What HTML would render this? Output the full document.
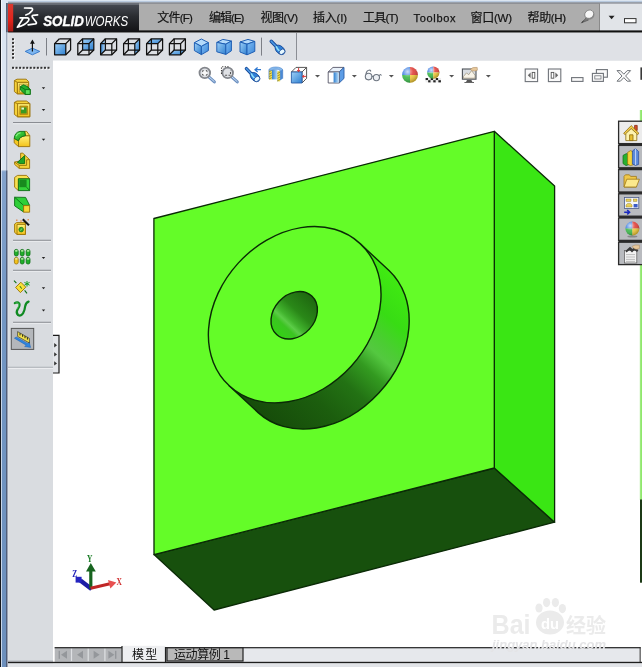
<!DOCTYPE html>
<html lang="zh-CN"><head><meta charset="utf-8"><title>SolidWorks</title>
<style>
html,body{margin:0;padding:0;background:#fff;}
body{width:642px;height:667px;overflow:hidden;position:relative;font-family:"Liberation Sans","Noto Sans CJK SC",sans-serif;}
svg{position:absolute;left:0;top:0;display:block;will-change:transform}
text{font-family:"Liberation Sans","Noto Sans CJK SC",sans-serif;}
</style></head><body>
<svg width="642" height="667" viewBox="0 0 642 667">
<defs>
<linearGradient id="logobg" x1="0" y1="0" x2="0" y2="1"><stop offset="0" stop-color="#464a52"/><stop offset="0.45" stop-color="#2a2c31"/><stop offset="1" stop-color="#131316"/></linearGradient>
<linearGradient id="redbg" x1="0" y1="0" x2="0" y2="1"><stop offset="0" stop-color="#d93a30"/><stop offset="0.6" stop-color="#e0241c"/><stop offset="1" stop-color="#a81a14"/></linearGradient>
<linearGradient id="frameL" x1="0" y1="0" x2="0" y2="1"><stop offset="0" stop-color="#84a3cc"/><stop offset="0.3" stop-color="#7296c3"/><stop offset="1" stop-color="#6c8fbc"/></linearGradient>
<linearGradient id="cubeB" x1="0" y1="0" x2="1" y2="1"><stop offset="0" stop-color="#9fd0f7"/><stop offset="1" stop-color="#2d7fd0"/></linearGradient>
<linearGradient id="cubeB2" x1="0" y1="0" x2="1" y2="0"><stop offset="0" stop-color="#2d7fd0"/><stop offset="1" stop-color="#bfe0fa"/></linearGradient>
<linearGradient id="cubeB3" x1="0" y1="0" x2="1" y2="1"><stop offset="0" stop-color="#7fbdf4"/><stop offset="1" stop-color="#3b86d8"/></linearGradient>
<linearGradient id="yel" x1="0" y1="0" x2="0" y2="1"><stop offset="0" stop-color="#fff27a"/><stop offset="1" stop-color="#f4c21a"/></linearGradient>
<linearGradient id="grn" x1="0" y1="0" x2="1" y2="1"><stop offset="0" stop-color="#55e04a"/><stop offset="1" stop-color="#0f9a1a"/></linearGradient>
<radialGradient id="ballhl" cx="0.35" cy="0.3" r="0.7"><stop offset="0" stop-color="#fff" stop-opacity="0.75"/><stop offset="0.5" stop-color="#fff" stop-opacity="0.1"/><stop offset="1" stop-color="#000" stop-opacity="0.25"/></radialGradient>
</defs>

<rect x="0" y="0" width="642" height="667" fill="#ffffff"/>
<rect x="8" y="32.4" width="634" height="28.1" fill="#dcdfe4"/>
<rect x="8" y="60" width="45" height="607" fill="#d9dce0"/>
<rect x="0" y="0" width="642" height="1.2" fill="#dbe5f0"/>
<rect x="0" y="1.2" width="642" height="1.2" fill="#a9bdd6"/>
<rect x="0" y="2.4" width="642" height="1.6" fill="#6e737c"/>
<rect x="139" y="3.5" width="461" height="27.5" fill="#adadad"/>
<rect x="600" y="3.5" width="42" height="27.5" fill="#e1e4e8"/>
<rect x="599" y="3.5" width="1" height="27.5" fill="#8a8a8a"/>
<rect x="8" y="30.4" width="634" height="2.1" fill="#101010"/>
<rect x="8" y="3.9" width="131" height="27.6" fill="url(#logobg)"/>
<rect x="8" y="3.9" width="131" height="1" fill="#6a6e76"/>
<rect x="7.7" y="3.9" width="5.5" height="27.6" fill="url(#redbg)"/>
<rect x="0" y="0" width="8" height="667" fill="#dbe5f2"/>
<rect x="2" y="171" width="4.4" height="496" fill="url(#frameL)"/>
<rect x="2" y="170" width="4.4" height="1.2" fill="#b4c6de"/>
<rect x="6.2" y="32.4" width="1.3" height="138" fill="#8f99ac"/>
<rect x="6.2" y="3" width="1.5" height="29.4" fill="#333c52"/>
<rect x="6.2" y="170.4" width="1.5" height="497" fill="#3a4560"/>
<rect x="7.6" y="32.4" width="0.6" height="635" fill="#e8ebef"/>
<rect x="0" y="0" width="1" height="667" fill="#15171c"/>
<rect x="1" y="0" width="1" height="170.6" fill="#f2f5fa"/>
<rect x="1" y="170.6" width="1" height="497" fill="#c9d7ea"/>
<g fill="none" stroke="#fff" stroke-width="1.7" stroke-linecap="round" stroke-linejoin="round"><path d="M24.6 8 L31.4 8.2 Q33.2 8.6 32.2 10.4 Q30 13.6 25.8 15"/><path d="M20 17.8 L27.4 17.9 Q29.8 18.4 28.4 20.8 Q25.6 25.2 17.4 27.2 L22.8 18.8"/><path d="M37.6 14.8 L33 15.4 Q31.6 15.8 32.4 17.2 L36.2 22.2 Q37 23.6 35.2 23.9 L28.2 24.9"/></g>
<text x="43.2" y="25.8" font-size="14" font-style="italic" fill="#fff"><tspan font-weight="bold" stroke="#fff" stroke-width="0.35" textLength="40.6" lengthAdjust="spacingAndGlyphs">SOLID</tspan><tspan dx="0.9" textLength="43.4" lengthAdjust="spacingAndGlyphs">WORKS</tspan></text>
<text x="157.3" y="22" font-size="12" fill="#141414" stroke="#141414" stroke-width="0.2" textLength="35.5" lengthAdjust="spacing">文件<tspan font-size="11.5">(F)</tspan></text>
<text x="209" y="22" font-size="12" fill="#141414" stroke="#141414" stroke-width="0.2" textLength="35.400000000000006" lengthAdjust="spacing">编辑<tspan font-size="11.5">(E)</tspan></text>
<text x="260.5" y="22" font-size="12" fill="#141414" stroke="#141414" stroke-width="0.2" textLength="37.5" lengthAdjust="spacing">视图<tspan font-size="11.5">(V)</tspan></text>
<text x="313" y="22" font-size="12" fill="#141414" stroke="#141414" stroke-width="0.2" textLength="34" lengthAdjust="spacing">插入<tspan font-size="11.5">(I)</tspan></text>
<text x="363" y="22" font-size="12" fill="#141414" stroke="#141414" stroke-width="0.2" textLength="35.5" lengthAdjust="spacing">工具<tspan font-size="11.5">(T)</tspan></text>
<text x="413.5" y="22" font-size="11" fill="#141414" stroke="#141414" stroke-width="0.25" textLength="42.0" lengthAdjust="spacing">Toolbox</text>
<text x="470.5" y="22" font-size="12" fill="#141414" stroke="#141414" stroke-width="0.2" textLength="41.5" lengthAdjust="spacing">窗口<tspan font-size="11.5">(W)</tspan></text>
<text x="527.5" y="22" font-size="12" fill="#141414" stroke="#141414" stroke-width="0.2" textLength="38.5" lengthAdjust="spacing">帮助<tspan font-size="11.5">(H)</tspan></text>
<g><path d="M586.4 17.6 L582 22.6 L588.6 20 Z" fill="#7c7c7c" stroke="#4a4a4a" stroke-width="0.6"/><path d="M581.4 23.2 L583.6 20.6" stroke="#333" stroke-width="0.9"/><ellipse cx="589.6" cy="15" rx="5" ry="4.5" fill="#8a8a8a" transform="rotate(-30 589.6 15)"/><ellipse cx="589.2" cy="14.2" rx="4.6" ry="4" fill="#f6f6f6" stroke="#6a6a6a" stroke-width="0.6" transform="rotate(-30 589.2 14.2)"/></g>
<path d="M608.6 15.8 L614.6 15.8 L611.6 19.2 Z" fill="#222"/>
<rect x="624.5" y="18.6" width="11.5" height="4.2" fill="#fff" stroke="#333" stroke-width="1"/>
<rect x="13" y="39.2" width="1.8" height="1.8" fill="#fff"/><rect x="12" y="38.2" width="2" height="2" fill="#333"/>
<rect x="13" y="42.9" width="1.8" height="1.8" fill="#fff"/><rect x="12" y="41.9" width="2" height="2" fill="#333"/>
<rect x="13" y="46.6" width="1.8" height="1.8" fill="#fff"/><rect x="12" y="45.6" width="2" height="2" fill="#333"/>
<rect x="13" y="50.3" width="1.8" height="1.8" fill="#fff"/><rect x="12" y="49.3" width="2" height="2" fill="#333"/>
<rect x="13" y="54.0" width="1.8" height="1.8" fill="#fff"/><rect x="12" y="53.0" width="2" height="2" fill="#333"/>
<rect x="13" y="57.7" width="1.8" height="1.8" fill="#fff"/><rect x="12" y="56.7" width="2" height="2" fill="#333"/>
<g><path d="M25.2 51.4 L32.4 48.2 L39.8 51.4 L32.4 54.8 Z" fill="#7db6f0" stroke="#2f74c8" stroke-width="0.9"/><path d="M32.4 51.4 L32.4 41.6" stroke="#111" stroke-width="1.2"/><path d="M30 43.8 L32.4 39.6 L34.8 43.8 Z" fill="#111"/></g>
<rect x="46" y="38" width="1" height="17.5" fill="#7c7f86"/>
<g><rect x="54.6" y="43.599999999999994" width="11.2" height="11.2" fill="url(#cubeB)"/><path d="M59.4 38.8 L70.6 38.8 L70.6 50.0" stroke="#111" stroke-width="1.25" fill="none" stroke-linejoin="round"/><rect x="54.6" y="43.599999999999994" width="11.2" height="11.2" fill="url(#cubeB)"/><rect x="54.6" y="43.599999999999994" width="11.2" height="11.2" stroke="#111" stroke-width="1.25" fill="none" stroke-linejoin="round"/><path d="M54.6 43.599999999999994 L59.4 38.8 M65.8 43.599999999999994 L70.6 38.8 M65.8 54.8 L70.6 50.0" stroke="#111" stroke-width="1.25" fill="none" stroke-linejoin="round"/></g>
<g><rect x="82.6" y="38.8" width="11.2" height="11.2" fill="url(#cubeB)"/><rect x="82.6" y="38.8" width="11.2" height="11.2" stroke="#111" stroke-width="1.25" fill="none" stroke-linejoin="round"/><rect x="77.8" y="43.599999999999994" width="11.2" height="11.2" stroke="#111" stroke-width="1.25" fill="none" stroke-linejoin="round"/><path d="M77.8 43.599999999999994 L82.6 38.8 M89.0 43.599999999999994 L93.8 38.8 M77.8 54.8 L82.6 50.0 M89.0 54.8 L93.8 50.0" stroke="#111" stroke-width="1.25" fill="none" stroke-linejoin="round"/></g>
<g><path d="M100.6 43.599999999999994 L105.39999999999999 38.8 L105.39999999999999 50.0 L100.6 54.8 Z" fill="url(#cubeB2)"/><rect x="105.39999999999999" y="38.8" width="11.2" height="11.2" stroke="#111" stroke-width="1.25" fill="none" stroke-linejoin="round"/><rect x="100.6" y="43.599999999999994" width="11.2" height="11.2" stroke="#111" stroke-width="1.25" fill="none" stroke-linejoin="round"/><path d="M100.6 43.599999999999994 L105.39999999999999 38.8 M111.8 43.599999999999994 L116.6 38.8 M100.6 54.8 L105.39999999999999 50.0 M111.8 54.8 L116.6 50.0" stroke="#111" stroke-width="1.25" fill="none" stroke-linejoin="round"/></g>
<g><path d="M134.79999999999998 43.599999999999994 L139.6 38.8 L139.6 50.0 L134.79999999999998 54.8 Z" fill="url(#cubeB)"/><rect x="128.4" y="38.8" width="11.2" height="11.2" stroke="#111" stroke-width="1.25" fill="none" stroke-linejoin="round"/><rect x="123.6" y="43.599999999999994" width="11.2" height="11.2" stroke="#111" stroke-width="1.25" fill="none" stroke-linejoin="round"/><path d="M123.6 43.599999999999994 L128.4 38.8 M134.79999999999998 43.599999999999994 L139.6 38.8 M123.6 54.8 L128.4 50.0 M134.79999999999998 54.8 L139.6 50.0" stroke="#111" stroke-width="1.25" fill="none" stroke-linejoin="round"/></g>
<g><path d="M146.6 43.599999999999994 L151.4 38.8 L162.6 38.8 L157.79999999999998 43.599999999999994 Z" fill="url(#cubeB)"/><rect x="151.4" y="38.8" width="11.2" height="11.2" stroke="#111" stroke-width="1.25" fill="none" stroke-linejoin="round"/><rect x="146.6" y="43.599999999999994" width="11.2" height="11.2" stroke="#111" stroke-width="1.25" fill="none" stroke-linejoin="round"/><path d="M146.6 43.599999999999994 L151.4 38.8 M157.79999999999998 43.599999999999994 L162.6 38.8 M146.6 54.8 L151.4 50.0 M157.79999999999998 54.8 L162.6 50.0" stroke="#111" stroke-width="1.25" fill="none" stroke-linejoin="round"/></g>
<g><path d="M169.4 54.8 L174.20000000000002 50.0 L185.4 50.0 L180.6 54.8 Z" fill="url(#cubeB)"/><rect x="174.20000000000002" y="38.8" width="11.2" height="11.2" stroke="#111" stroke-width="1.25" fill="none" stroke-linejoin="round"/><rect x="169.4" y="43.599999999999994" width="11.2" height="11.2" stroke="#111" stroke-width="1.25" fill="none" stroke-linejoin="round"/><path d="M169.4 43.599999999999994 L174.20000000000002 38.8 M180.6 43.599999999999994 L185.4 38.8 M169.4 54.8 L174.20000000000002 50.0 M180.6 54.8 L185.4 50.0" stroke="#111" stroke-width="1.25" fill="none" stroke-linejoin="round"/></g>
<g stroke="#1f5fb4" stroke-width="1" stroke-linejoin="round"><path d="M201.4 39 L208.4 42.6 L201.4 46.4 L194.4 42.6 Z" fill="#b4dafb"/><path d="M194.4 42.6 L201.4 46.4 L201.4 54.6 L194.4 50.6 Z" fill="url(#cubeB)"/><path d="M208.4 42.6 L201.4 46.4 L201.4 54.6 L208.4 50.6 Z" fill="url(#cubeB3)"/></g>
<g stroke="#1f5fb4" stroke-width="1" stroke-linejoin="round"><path d="M216.8 42.4 L222.8 39.4 L231.4 41.0 L225.8 44.199999999999996 Z" fill="#b4dafb"/><path d="M216.8 42.4 L225.8 44.199999999999996 L225.8 54.4 L216.8 51.8 Z" fill="url(#cubeB)"/><path d="M231.4 41.0 L225.8 44.199999999999996 L225.8 54.4 L231.4 50.8 Z" fill="url(#cubeB3)"/></g>
<g stroke="#1f5fb4" stroke-width="1" stroke-linejoin="round"><path d="M240 42.0 L248 39.4 L254.8 41.4 L247 44.199999999999996 Z" fill="#b4dafb"/><path d="M240 42.0 L247 44.199999999999996 L247 54.8 L240 52.0 Z" fill="url(#cubeB)"/><path d="M254.8 41.4 L247 44.199999999999996 L247 54.8 L254.8 51.4 Z" fill="url(#cubeB3)"/></g>
<rect x="261" y="37.6" width="1" height="18" fill="#7c7f86"/>
<g transform="translate(270.2 40.2) scale(1.0)"><path d="M1 1 L6.4 6.6" stroke="#164a9a" stroke-width="3.4" stroke-linecap="round"/><path d="M1 1 L6.4 6.6" stroke="#4d9ae6" stroke-width="1.6" stroke-linecap="round"/><ellipse cx="9.8" cy="9.6" rx="5.6" ry="3.7" transform="rotate(42 9.8 9.6)" fill="#2f7fd6" stroke="#164a9a" stroke-width="0.9"/><path d="M6 6.4 Q7.6 9.6 10 11.4" fill="none" stroke="#8fe0fa" stroke-width="1.6" stroke-linecap="round"/><ellipse cx="11.8" cy="11.6" rx="3.2" ry="2.3" transform="rotate(-40 11.8 11.6)" fill="#e6f8ff" stroke="#164a9a" stroke-width="0.8"/></g>
<rect x="296" y="33" width="1" height="27" fill="#8b8e95"/>
<rect x="297" y="33" width="345" height="27.5" fill="#dfe1e6"/>
<g><path d="M208.8 76.9 L214.4 81.9" stroke="#6b8fc0" stroke-width="3" stroke-linecap="round"/><path d="M209.20000000000002 77.10000000000001 L214.20000000000002 81.5" stroke="#cfe2f7" stroke-width="1" stroke-linecap="round"/><circle cx="204.8" cy="72.9" r="5.3" fill="#dfe1e5" stroke="#83868c" stroke-width="1.8"/>
<rect x="202.60000000000002" y="70.7" width="4.4" height="4.4" fill="#f8f8f8" stroke="#555" stroke-width="1" stroke-dasharray="2.2 2.2" stroke-dashoffset="1.1"/>
</g>
<g><path d="M231.7 76.9 L237.29999999999998 81.9" stroke="#6b8fc0" stroke-width="3" stroke-linecap="round"/><path d="M232.1 77.10000000000001 L237.1 81.5" stroke="#cfe2f7" stroke-width="1" stroke-linecap="round"/><circle cx="227.7" cy="72.9" r="5.3" fill="#dfe1e5" stroke="#83868c" stroke-width="1.8"/>
<path d="M221.5 73.9 L221.5 66.7 L229.1 66.7" fill="none" stroke="#444" stroke-width="1.1" stroke-dasharray="1.3 1.3"/><path d="M225.1 75.30000000000001 L230.5 75.30000000000001 L230.5 70.30000000000001" fill="none" stroke="#555" stroke-width="1.1" stroke-dasharray="2 1.4"/>
</g>
<g transform="translate(245.4 67.6) scale(0.98)"><path d="M1 1 L6.4 6.6" stroke="#164a9a" stroke-width="3.4" stroke-linecap="round"/><path d="M1 1 L6.4 6.6" stroke="#4d9ae6" stroke-width="1.6" stroke-linecap="round"/><ellipse cx="9.8" cy="9.6" rx="5.6" ry="3.7" transform="rotate(42 9.8 9.6)" fill="#2f7fd6" stroke="#164a9a" stroke-width="0.9"/><path d="M6 6.4 Q7.6 9.6 10 11.4" fill="none" stroke="#8fe0fa" stroke-width="1.6" stroke-linecap="round"/><ellipse cx="11.8" cy="11.6" rx="3.2" ry="2.3" transform="rotate(-40 11.8 11.6)" fill="#e6f8ff" stroke="#164a9a" stroke-width="0.8"/></g>
<path d="M261 69.7 L255.4 69.7 M257.6 67.4 L255 69.7 L257.6 72" fill="none" stroke="#2f78d0" stroke-width="1.3"/>
<g><path d="M277.4 72 L282.7 69.6 L282.7 78.6 Q281 80.8 277.4 81.6 Z" fill="#4a8ad6"/><rect x="271.8" y="69.6" width="5.8" height="9.8" fill="url(#cubeB2)"/><rect x="269" y="69.8" width="2.9" height="9.8" fill="#f2e04c"/><rect x="277.4" y="71.2" width="2.7" height="10.2" fill="#f2e04c"/><path d="M269 71.8 L271.8 70.4 M269 74.2 L271.8 72.8 M269 76.6 L271.8 75.2 M269 79 L271.8 77.6 M277.4 73.6 L280 72.2 M277.4 76 L280 74.6 M277.4 78.4 L280 77 M277.4 80.8 L280 79.4" stroke="#8a7a30" stroke-width="0.8"/><path d="M268.9 70 A6.9 3 0 0 1 282.7 70 L280 71.4 A4 1.6 0 0 0 271.8 70.4 Z" fill="#86b8ec" stroke="#4a86cc" stroke-width="0.6"/><path d="M268.9 70 L268.9 78.8 M282.7 70 L282.7 78.6" stroke="#3a74c0" stroke-width="0.6"/></g>
<g stroke-linejoin="round"><path d="M291.4 72 L296 67.4 L306.6 67.4 L306.6 78.4 L302 83 L302 72 Z" fill="#fdfdfd" stroke="#444" stroke-width="0.9"/><path d="M302 72 L306.6 67.4" stroke="#444" stroke-width="0.9"/><rect x="291.4" y="72" width="10.6" height="11" fill="url(#cubeB)" stroke="#2a5fa8" stroke-width="0.9"/><path d="M298.6 68 L298.6 71.4 M297.2 70 L298.6 71.6 L300 70" fill="none" stroke="#d22" stroke-width="0.9"/><path d="M306 76.4 L302.8 76.4 M304.2 75 L302.6 76.4 L304.2 77.8" fill="none" stroke="#d22" stroke-width="0.9"/></g>
<path d="M315.0 74.9 L320.0 74.9 L317.5 77.5 Z" fill="#555"/>
<g stroke-linejoin="round"><path d="M328.2 72 L333 67.4 L344 67.4 L339.2 72 Z" fill="#e9f1fa" stroke="#556" stroke-width="0.9"/><path d="M339.2 72 L344 67.4 L344 78.4 L339.2 83 Z" fill="#5d9de6" stroke="#2a5fa8" stroke-width="0.9"/><rect x="328.2" y="72" width="11" height="11" fill="#fff" stroke="#556" stroke-width="0.9"/><rect x="333.6" y="72.4" width="5.2" height="10.2" fill="url(#cubeB2)"/></g>
<path d="M351.9 74.9 L356.9 74.9 L354.4 77.5 Z" fill="#555"/>
<g fill="#eef1f5" stroke="#6d7580" stroke-width="1.1"><circle cx="368.6" cy="76.6" r="3.3"/><circle cx="376.4" cy="77.6" r="3.1"/><path d="M366 74.2 Q366.4 70.2 369.8 70 Q371 70.4 370.6 71.6" fill="none"/><path d="M379.2 75.8 Q380.6 73.2 381.4 75.6" fill="none"/><path d="M371.8 76.6 Q372.6 75.8 373.4 76.8" fill="none"/></g>
<path d="M388.9 74.9 L393.9 74.9 L391.4 77.5 Z" fill="#555"/>
<g><path d="M410 74.9 L410 67.0 A7.9 7.9 0 0 0 402.1 74.9 Z" fill="#3a7be0"/><path d="M410 74.9 L417.9 74.9 A7.9 7.9 0 0 0 410 67.0 Z" fill="#e0403a"/><path d="M410 74.9 L402.1 74.9 A7.9 7.9 0 0 0 410 82.80000000000001 Z" fill="#3cb84a"/><path d="M410 74.9 L410 82.80000000000001 A7.9 7.9 0 0 0 417.9 74.9 Z" fill="#f0c93a"/><circle cx="410" cy="74.9" r="7.9" fill="url(#ballhl)"/></g>
<rect x="425.60" y="78.0" width="2.55" height="2.2" fill="#222"/>
<rect x="425.60" y="80.2" width="2.55" height="2.2" fill="#eee"/>
<rect x="428.15" y="78.0" width="2.55" height="2.2" fill="#eee"/>
<rect x="428.15" y="80.2" width="2.55" height="2.2" fill="#222"/>
<rect x="430.70" y="78.0" width="2.55" height="2.2" fill="#222"/>
<rect x="430.70" y="80.2" width="2.55" height="2.2" fill="#eee"/>
<rect x="433.25" y="78.0" width="2.55" height="2.2" fill="#eee"/>
<rect x="433.25" y="80.2" width="2.55" height="2.2" fill="#222"/>
<rect x="435.80" y="78.0" width="2.55" height="2.2" fill="#222"/>
<rect x="435.80" y="80.2" width="2.55" height="2.2" fill="#eee"/>
<rect x="438.35" y="78.0" width="2.55" height="2.2" fill="#eee"/>
<rect x="438.35" y="80.2" width="2.55" height="2.2" fill="#222"/>
<g><path d="M433.3 72.6 L433.3 66.39999999999999 A6.2 6.2 0 0 0 427.1 72.6 Z" fill="#3a7be0"/><path d="M433.3 72.6 L439.5 72.6 A6.2 6.2 0 0 0 433.3 66.39999999999999 Z" fill="#e0403a"/><path d="M433.3 72.6 L427.1 72.6 A6.2 6.2 0 0 0 433.3 78.8 Z" fill="#3cb84a"/><path d="M433.3 72.6 L433.3 78.8 A6.2 6.2 0 0 0 439.5 72.6 Z" fill="#f0c93a"/><circle cx="433.3" cy="72.6" r="6.2" fill="url(#ballhl)"/></g>
<path d="M449.1 74.9 L454.1 74.9 L451.6 77.5 Z" fill="#555"/>
<g><rect x="462.4" y="69" width="13.6" height="10.2" fill="#d9dde2" stroke="#4d5258" stroke-width="1.1"/><path d="M463.4 76.6 L466.6 72.8 L468.6 74.8 L471.6 70.6 L475 75.2 L475 78.2 L463.4 78.2 Z" fill="#f7f3e8" stroke="#7a6c50" stroke-width="0.5"/><path d="M467 80 L471.4 80 L472.4 82 L466 82 Z" fill="#555"/><rect x="464.4" y="82" width="9.6" height="0.9" fill="#555"/><path d="M470.2 69.4 Q472.4 66.6 477.2 67.4 L477.4 70.2 Q474.4 71.6 472.4 70.8 Z" fill="#e6c79a" stroke="#a7855a" stroke-width="0.5"/></g>
<path d="M485.9 74.9 L490.9 74.9 L488.4 77.5 Z" fill="#555"/>
<g fill="#fafafa" stroke="#70747a" stroke-width="1.1"><rect x="525.2" y="69" width="12.4" height="12.6"/><rect x="548.4" y="69" width="12.4" height="12.6"/></g>
<rect x="532.2" y="72.4" width="2.6" height="5.8" fill="#fff" stroke="#555" stroke-width="0.9"/><path d="M530.6 72.6 L530.6 78 L527.8 75.3 Z" fill="#666"/>
<rect x="551.2" y="72.4" width="2.6" height="5.8" fill="#fff" stroke="#555" stroke-width="0.9"/><path d="M555.4 72.6 L555.4 78 L558.2 75.3 Z" fill="#666"/>
<rect x="571.6" y="77.6" width="11.4" height="3.8" fill="#fafafa" stroke="#70747a" stroke-width="1.1"/>
<g fill="#fafafa" stroke="#70747a" stroke-width="1.1"><rect x="596.4" y="69.6" width="11" height="7.6"/><rect x="592.4" y="73.4" width="11" height="8"/><rect x="594.8" y="75.8" width="6.2" height="3.2" stroke-width="0.8"/></g>
<path d="M617 70.6 L620.4 70.6 L623.8 74.2 L627.2 70.6 L630.6 70.6 L625.6 76 L630.6 81.2 L627.2 81.2 L623.8 77.6 L620.4 81.2 L617 81.2 L622 76 Z" fill="#fafafa" stroke="#70747a" stroke-width="1"/>
<rect x="640.4" y="67.4" width="1.6" height="12.4" fill="#3a3a3a"/>
<rect x="13.00" y="67.8" width="1.8" height="1.8" fill="#fff"/><rect x="12.00" y="66.8" width="2" height="2" fill="#333"/>
<rect x="16.55" y="67.8" width="1.8" height="1.8" fill="#fff"/><rect x="15.55" y="66.8" width="2" height="2" fill="#333"/>
<rect x="20.10" y="67.8" width="1.8" height="1.8" fill="#fff"/><rect x="19.10" y="66.8" width="2" height="2" fill="#333"/>
<rect x="23.65" y="67.8" width="1.8" height="1.8" fill="#fff"/><rect x="22.65" y="66.8" width="2" height="2" fill="#333"/>
<rect x="27.20" y="67.8" width="1.8" height="1.8" fill="#fff"/><rect x="26.20" y="66.8" width="2" height="2" fill="#333"/>
<rect x="30.75" y="67.8" width="1.8" height="1.8" fill="#fff"/><rect x="29.75" y="66.8" width="2" height="2" fill="#333"/>
<rect x="34.30" y="67.8" width="1.8" height="1.8" fill="#fff"/><rect x="33.30" y="66.8" width="2" height="2" fill="#333"/>
<rect x="37.85" y="67.8" width="1.8" height="1.8" fill="#fff"/><rect x="36.85" y="66.8" width="2" height="2" fill="#333"/>
<rect x="41.40" y="67.8" width="1.8" height="1.8" fill="#fff"/><rect x="40.40" y="66.8" width="2" height="2" fill="#333"/>
<rect x="44.95" y="67.8" width="1.8" height="1.8" fill="#fff"/><rect x="43.95" y="66.8" width="2" height="2" fill="#333"/>
<rect x="48.50" y="67.8" width="1.8" height="1.8" fill="#fff"/><rect x="47.50" y="66.8" width="2" height="2" fill="#333"/>
<rect x="13" y="122.2" width="38" height="1" fill="#777a81"/><rect x="13" y="123.2" width="38" height="1" fill="#eceef1"/>
<rect x="13" y="239.8" width="38" height="1" fill="#777a81"/><rect x="13" y="240.8" width="38" height="1" fill="#eceef1"/>
<rect x="13" y="269.8" width="38" height="1" fill="#777a81"/><rect x="13" y="270.8" width="38" height="1" fill="#eceef1"/>
<rect x="13" y="321.8" width="38" height="1" fill="#777a81"/><rect x="13" y="322.8" width="38" height="1" fill="#eceef1"/>
<g stroke="#9a7208" stroke-width="0.9" stroke-linejoin="round"><path d="M14.4 80.6 L17 79.2 L26.2 79.2 L28.6 81.6 L28.6 93.8 L17.4 93.8 L14.4 91.6 Z" fill="#f6d23a"/><path d="M14.4 80.6 L17.4 82.4 L28.6 82.4 M17.4 82.4 L17.4 93.8" fill="none"/><rect x="17.4" y="82.4" width="11.2" height="11.4" fill="url(#yel)"/><rect x="19.4" y="84.2" width="8" height="8" fill="#fbe98a" stroke-width="0.6"/></g>
<g stroke="#0c6e14" stroke-width="0.9" stroke-linejoin="round"><path d="M20.4 86.6 L23.4 84.8 L27.2 86.4 L30.2 89.6 L30.2 94.4 L25.2 94.4 L20.4 90 Z" fill="#22b02c"/><rect x="25.2" y="89.6" width="5" height="4.8" fill="#58e058"/><path d="M20.4 86.6 L25.2 89.6 M27.2 86.4 L30.2 89.6" fill="none"/></g>
<path d="M41.8 87.2 L45.2 87.2 L43.5 89.2 Z" fill="#222"/>
<g stroke="#9a7208" stroke-width="0.9" stroke-linejoin="round"><path d="M14.4 102.4 L17 101 L26.4 101 L29.8 103.4 L29.8 116.8 L17.6 116.8 L14.4 114.4 Z" fill="#f6d23a"/><rect x="17.6" y="103.6" width="12.2" height="13.2" fill="url(#yel)"/><path d="M14.4 102.4 L17.6 103.6" fill="none"/><rect x="19.8" y="106" width="7.8" height="8.4" fill="#c49a10" stroke-width="0.6"/></g>
<rect x="21" y="107.4" width="5.6" height="6" fill="#3a9a22"/><rect x="21.4" y="107.6" width="2.6" height="2" fill="#e8f5d0"/>
<path d="M41.8 109 L45.2 109 L43.5 111 Z" fill="#222"/>
<g stroke="#9a7208" stroke-width="0.9" stroke-linejoin="round"><path d="M14.2 138.4 L18.5 140.8 L18.5 146.6 L14.2 142.8 Z" fill="#f4c820"/><path d="M18.5 146.6 L18.5 140.8 Q19.6 136.4 25.5 135.7 L29.8 135.7 L29.8 146.6 Z" fill="url(#yel)"/><path d="M24.6 131.4 L26.7 131.4 L29.8 135.7 L25.5 135.7 Z" fill="#f8e060"/></g>
<g stroke="#0c6e14" stroke-width="0.9" stroke-linejoin="round"><path d="M14.2 138.4 Q14.8 132.2 20 131.4 L24.6 131.4 L25.5 135.7 Q19.6 136.4 18.5 140.8 Z" fill="url(#grn)"/></g>
<path d="M16 136.2 Q17.4 133.4 20.6 132.8" stroke="#8cf08a" stroke-width="1.1" fill="none"/>
<path d="M41.8 138.8 L45.2 138.8 L43.5 140.8 Z" fill="#222"/>
<g stroke="#9a7208" stroke-width="0.9" stroke-linejoin="round"><path d="M14.6 162 L20.6 161 L20.6 153.2 L22.8 153.2 L29.6 159.6 L29.6 168.4 L19.2 168.4 L14.6 164.4 Z" fill="#f6d23a"/><path d="M19.2 168.4 L19.2 165.4 L26.6 165.4 L26.6 159.8 L29.6 159.6" fill="none"/><path d="M14.6 162 L19.2 165.4" fill="none"/></g>
<path d="M17.4 162.4 L24.6 155.6 L24.6 163.6 L19.6 163.6 Z" fill="#1fa428" stroke="#0c6e14" stroke-width="0.9" stroke-linejoin="round"/>
<g stroke="#9a7208" stroke-width="0.9" stroke-linejoin="round"><path d="M14.6 177.4 L17.6 175.4 L26.6 175.4 L29.6 178.8 L18.4 178.8 L18.4 190.6 L14.6 187.2 Z" fill="#f8e050"/></g>
<g stroke="#0c6e14" stroke-width="0.9" stroke-linejoin="round"><rect x="18.4" y="178.8" width="11.2" height="11.8" fill="#35d23a"/><rect x="19.4" y="179.6" width="7.2" height="7.6" fill="#188a1e" stroke="none"/><path d="M26.6 187.2 L29.6 190.6" fill="none"/></g>
<g stroke="#0c6e14" stroke-width="0.9" stroke-linejoin="round"><path d="M14.6 197.2 L25.6 197.4 L29.6 205.4 L23.6 205.4 L23.6 212 L14.6 205.8 Z" fill="#2fcf38"/><path d="M14.6 197.2 L23.6 205.4" fill="none"/></g>
<rect x="23.6" y="205.6" width="6" height="6.6" fill="#f8d838" stroke="#9a7208" stroke-width="0.9" stroke-linejoin="round"/>
<g stroke="#9a7208" stroke-width="0.9" stroke-linejoin="round"><path d="M14.6 224 L16.6 222.6 L25.4 222.6 L25.4 234.4 L17 234.4 L14.6 232.4 Z" fill="#f6d23a"/><rect x="17" y="224.4" width="8.4" height="10" fill="url(#yel)"/></g>
<circle cx="21.2" cy="229.6" r="2.3" fill="#2faa2a" stroke="#0c6e14" stroke-width="0.7"/><path d="M20.4 230.6 L22 228.4" stroke="#c8f0b8" stroke-width="0.6"/>
<path d="M22.8 219.2 L29 225.2" stroke="#111" stroke-width="2.2"/><path d="M24.4 219.6 L29.4 224.4" stroke="#999" stroke-width="0.5"/>
<g fill="#e86a10"><rect x="16.2" y="219.6" width="1.2" height="1.2"/><rect x="20.4" y="220.4" width="1.2" height="1.2"/><rect x="27.6" y="219.2" width="1.2" height="1.2"/></g>
<rect x="14.4" y="249.4" width="3.8" height="6.6" rx="1.8" fill="#1fae2a" stroke="#0c6e14" stroke-width="0.8"/><ellipse cx="16.3" cy="250.8" rx="1.5" ry="0.9" fill="#d6f7c0" opacity="0.8"/>
<rect x="20.3" y="249.4" width="3.8" height="6.6" rx="1.8" fill="#1fae2a" stroke="#0c6e14" stroke-width="0.8"/><ellipse cx="22.2" cy="250.8" rx="1.5" ry="0.9" fill="#d6f7c0" opacity="0.8"/>
<rect x="26.2" y="249.4" width="3.8" height="6.6" rx="1.8" fill="#1fae2a" stroke="#0c6e14" stroke-width="0.8"/><ellipse cx="28.1" cy="250.8" rx="1.5" ry="0.9" fill="#d6f7c0" opacity="0.8"/>
<rect x="14.4" y="257.4" width="3.8" height="6.6" rx="1.8" fill="#f2c21c" stroke="#9a7208" stroke-width="0.8"/><ellipse cx="16.3" cy="258.8" rx="1.5" ry="0.9" fill="#d6f7c0" opacity="0.8"/>
<rect x="20.3" y="257.4" width="3.8" height="6.6" rx="1.8" fill="#1fae2a" stroke="#0c6e14" stroke-width="0.8"/><ellipse cx="22.2" cy="258.8" rx="1.5" ry="0.9" fill="#d6f7c0" opacity="0.8"/>
<rect x="26.2" y="257.4" width="3.8" height="6.6" rx="1.8" fill="#1fae2a" stroke="#0c6e14" stroke-width="0.8"/><ellipse cx="28.1" cy="258.8" rx="1.5" ry="0.9" fill="#d6f7c0" opacity="0.8"/>
<path d="M41.8 257 L45.2 257 L43.5 259 Z" fill="#222"/>
<path d="M14 280.6 L16.4 283.2 M24.6 290.4 L27 293.4" stroke="#0c6e14" stroke-width="1.1"/>
<path d="M15.6 287.4 L20.8 282.2 L25.8 287.2 L20.4 292.6 Z" fill="#f8e038" stroke="#9a7208" stroke-width="0.9" stroke-linejoin="round"/><path d="M20 286.2 L21.6 288.6" stroke="#0c6e14" stroke-width="1"/>
<path d="M27 281 L27 286.6 M24.4 282.4 L29.6 285.2 M29.6 282.4 L24.4 285.2" stroke="#17a022" stroke-width="1"/>
<path d="M41.8 287.2 L45.2 287.2 L43.5 289.2 Z" fill="#222"/>
<path d="M14.8 303.2 Q17.4 301.4 19.2 303.4 Q20.4 305.6 17.6 309.4 Q15.6 312.6 18 315 Q20.8 316.6 23 313.4 Q24.8 310.2 25.2 306.2 Q25.8 302.6 28.6 301.6" fill="none" stroke="#0f8a22" stroke-width="2.2" stroke-linecap="round"/>
<path d="M15.4 303 Q17.4 302 18.6 303.6 Q19.6 305.4 17 309.2" fill="none" stroke="#58c860" stroke-width="0.7"/>
<path d="M41.8 309.4 L45.2 309.4 L43.5 311.4 Z" fill="#222"/>
<rect x="11.3" y="328.4" width="22.4" height="21" fill="#b4b7bb" stroke="#555" stroke-width="1"/>
<path d="M14.4 338.2 L16.2 337 L27.6 343.4 L29.2 342 L30.6 347.4 L24.6 346.6 L26.2 345.2 Z" fill="#2f86e0" stroke="#1a5fb0" stroke-width="0.5"/>
<path d="M17.6 331.6 L29.4 338.4 L29.4 343 L17.6 336.4 Z" fill="#f0e04a" stroke="#222" stroke-width="0.6"/><path d="M20 333.2 L20 335.4 M22.6 334.6 L22.6 336.8 M25 336 L25 338.2 M27.4 337.4 L27.4 339.6" stroke="#111" stroke-width="0.9"/>
<rect x="8" y="366.8" width="45" height="1" fill="#9fa3aa"/><rect x="8" y="367.8" width="45" height="1" fill="#f1f2f4"/>
<rect x="53" y="335.8" width="6" height="37" fill="#e4e6ea"/>
<path d="M53 335.4 L59 335.4 L59 373 L53 373" fill="none" stroke="#1a1a1a" stroke-width="1.2"/>
<path d="M54.2 343.1 L57 345.3 L54.2 347.5 Z" fill="#333"/>
<path d="M54.2 352.2 L57 354.4 L54.2 356.59999999999997 Z" fill="#333"/>
<path d="M54.2 361.2 L57 363.4 L54.2 365.59999999999997 Z" fill="#333"/>
<defs>
<linearGradient id="sideg" gradientUnits="userSpaceOnUse" x1="366" y1="250" x2="236" y2="392">
<stop offset="0" stop-color="#40ea12"/><stop offset="0.18" stop-color="#38dc14"/><stop offset="0.30" stop-color="#4ccc34"/><stop offset="0.36" stop-color="#54c840"/><stop offset="0.45" stop-color="#339a20"/><stop offset="0.58" stop-color="#237214"/><stop offset="0.75" stop-color="#1c5e0e"/><stop offset="1" stop-color="#164c0a"/></linearGradient>
<linearGradient id="holeg" gradientUnits="userSpaceOnUse" x1="311" y1="298" x2="278" y2="333">
<stop offset="0" stop-color="#1f6a10"/><stop offset="0.40" stop-color="#2a8818"/><stop offset="0.62" stop-color="#42b42e"/><stop offset="0.71" stop-color="#5ccc48"/><stop offset="0.80" stop-color="#3cc422"/><stop offset="1" stop-color="#34d016"/></linearGradient>
</defs>
<path d="M154 554.6 L494.3 468 L554.6 522.2 L214.1 610 Z" fill="#17500d" stroke="#0a2a06" stroke-width="1.3" stroke-linejoin="round"/>
<path d="M494.3 131.3 L554.6 186 L554.6 522.2 L494.3 468 Z" fill="#3ae614" stroke="#0a2a06" stroke-width="1.3" stroke-linejoin="round"/>
<path d="M153.9 218.5 L494.3 131.3 L494.3 468 L154 554.6 Z" fill="#64fc28" stroke="#0a2a06" stroke-width="1.3" stroke-linejoin="round"/>
<path d="M360.26 243.76 L389.26 270.76 A96.6 76.0 -47.6 0 1 258.14 412.64 L229.14 385.64 Z" fill="url(#sideg)" stroke="#0a2a06" stroke-width="1.4" stroke-linejoin="round"/>
<path d="M229.56 386.03 A96.60 76.00 -47.6 1 0 359.84 243.37 A96.60 76.00 -47.6 1 0 229.56 386.03 Z" fill="#64fc28" stroke="#0a2a06" stroke-width="1.4"/>
<path d="M276.61 334.56 A26.08 20.52 -47.6 1 0 311.79 296.04 A26.08 20.52 -47.6 1 0 276.61 334.56 Z" fill="url(#holeg)" stroke="#0a2a06" stroke-width="1.4"/>
<rect x="640" y="110" width="2" height="390" fill="#8fe86c"/>
<rect x="639.6" y="110" width="0.6" height="390" fill="#d8f6cc"/>
<rect x="640" y="499.5" width="2" height="83.2" fill="#1c3a16"/>
<g stroke-linecap="butt"><path d="M91.6 589 L80.4 580.6" stroke="#1c1ca4" stroke-width="4.4"/><rect x="75.6" y="576.8" width="6" height="5.8" fill="#2424c0"/><path d="M90.8 588.6 L90.8 570" stroke="#17641f" stroke-width="3.2"/><path d="M86 571.4 L90.8 563 L95.8 571.4 Z" fill="#17641f"/><path d="M90.6 588.2 L110 583.8" stroke="#c02626" stroke-width="3"/><path d="M108 580 L116.4 582.4 L110.4 588.4 Z" fill="#e85050"/></g>
<text x="87" y="561.8" font-size="10" style="font-family:'Liberation Serif','DejaVu Serif',serif" font-weight="bold" fill="#167a22" textLength="5.4" lengthAdjust="spacingAndGlyphs">Y</text>
<text x="116.6" y="585" font-size="10" style="font-family:'Liberation Serif','DejaVu Serif',serif" font-weight="bold" fill="#d03030" textLength="5.4" lengthAdjust="spacingAndGlyphs">X</text>
<text x="72.2" y="577.4" font-size="10" style="font-family:'Liberation Serif','DejaVu Serif',serif" font-weight="bold" fill="#2222b8" textLength="5" lengthAdjust="spacingAndGlyphs">Z</text>
<rect x="618.6" y="121.2" width="24" height="143.4" fill="#2a2a2a"/>
<rect x="618.6" y="121.2" width="26" height="22.4" fill="#ececec" stroke="#2a2a2a" stroke-width="1.3"/>
<rect x="618.6" y="145.4" width="26" height="22.4" fill="#b9bbbf" stroke="#2a2a2a" stroke-width="1.3"/>
<rect x="618.6" y="169.6" width="26" height="22.4" fill="#b9bbbf" stroke="#2a2a2a" stroke-width="1.3"/>
<rect x="618.6" y="193.8" width="26" height="22.4" fill="#b9bbbf" stroke="#2a2a2a" stroke-width="1.3"/>
<rect x="618.6" y="218" width="26" height="22.4" fill="#b9bbbf" stroke="#2a2a2a" stroke-width="1.3"/>
<rect x="618.6" y="242.2" width="26" height="22.4" fill="#b9bbbf" stroke="#2a2a2a" stroke-width="1.3"/>
<g stroke="#8a6a10" stroke-width="0.8" stroke-linejoin="round"><rect x="634.6" y="125.4" width="2.6" height="5" fill="#d6502a" stroke="#8a2a10"/><path d="M623.6 133.4 L631.2 125.6 L639 133.4 L637.4 134.6 L631.2 128.6 L625.2 134.6 Z" fill="#f8d048"/><path d="M625.8 133.6 L631.2 128.6 L636.8 133.6 L636.8 140.6 L625.8 140.6 Z" fill="#fdf3b0"/><rect x="629.6" y="134.8" width="3.4" height="5.8" fill="#e8c030"/></g>
<g stroke-width="0.7"><path d="M623 155.4 L626.4 153.6 L629.4 155 L629.4 164.4 L626 165.6 L623 163.6 Z" fill="#28b030" stroke="#0c6e14"/><path d="M627.6 152.4 L630.6 150.6 L633.4 152 L633.4 164.6 L630.4 165.6 L627.6 164 Z" fill="#f4d43a" stroke="#9a7208"/><path d="M632.4 151 L635.6 148.6 L638.6 151.6 L638.6 164.4 L635.6 165.4 L632.4 164 Z" fill="#5a8adc" stroke="#2a4a98"/><path d="M635.6 148.6 L635.6 165" stroke="#dfe8fa" stroke-width="0.8"/></g>
<g stroke="#a07818" stroke-width="0.8" stroke-linejoin="round"><path d="M624 176.4 L625.4 174.8 L629.4 174.8 L630.6 176.4 L636.4 176.4 L636.4 187 L624 187 Z" fill="#f0c84a"/><path d="M624 187 L626.8 179.2 L639.4 179.2 L636.4 187 Z" fill="#fce98c"/></g>
<g><rect x="624.4" y="197.4" width="14.4" height="11" fill="#f4f6fa" stroke="#4a5a88" stroke-width="0.8"/><rect x="626" y="199" width="5" height="2.4" fill="#e8d05a" stroke="#86701a" stroke-width="0.4"/><rect x="633.4" y="199" width="3.6" height="2.4" fill="#e8d05a" stroke="#86701a" stroke-width="0.4"/><path d="M626 207 L626 205 L627.6 203.4 L630.4 203.4 L632 205 L632 207 Z" fill="#e8d05a" stroke="#86701a" stroke-width="0.4"/><rect x="633.6" y="204" width="4" height="3.4" fill="#3a5ac8"/><path d="M624.2 212.2 L629 212.2 M627.2 210 L629.6 212.2 L627.2 214.4" fill="none" stroke="#1a2ac0" stroke-width="1.5"/></g>
<g><path d="M632.4 228.6 L632.4 221.6 A7 7 0 0 0 625.4 228.6 Z" fill="#3a7be0"/><path d="M632.4 228.6 L639.4 228.6 A7 7 0 0 0 632.4 221.6 Z" fill="#e0403a"/><path d="M632.4 228.6 L625.4 228.6 A7 7 0 0 0 632.4 235.6 Z" fill="#3cb84a"/><path d="M632.4 228.6 L632.4 235.6 A7 7 0 0 0 639.4 228.6 Z" fill="#f0c93a"/><circle cx="632.4" cy="228.6" r="7" fill="url(#ballhl)"/></g>
<ellipse cx="632.4" cy="236.6" rx="5" ry="1" fill="#555" opacity="0.5"/>
<g><rect x="624.4" y="250.4" width="12.4" height="12.6" fill="#f2f2f2" stroke="#666" stroke-width="0.8"/><path d="M626 254.6 L635 254.6 M626 257 L635 257 M626 259.4 L635 259.4 M626 261.4 L635 261.4" stroke="#999" stroke-width="0.6"/><path d="M625.4 251 L630 246.8 L632.4 249 L635 246.4 L638.4 250.4 L637 252 L634.4 250 L632 252.4 L629.6 250 L626.4 252.4 Z" fill="#3a3a3a"/><path d="M632 246.4 Q634.4 244.2 639.4 245.2 L639.4 248.6 Q636 250 634 248.6 Z" fill="#e6c79a" stroke="#a7855a" stroke-width="0.5"/></g>
<rect x="54.6" y="647.6" width="586" height="14.4" fill="#e6e8ec"/>
<rect x="639.6" y="647.2" width="1.1" height="15" fill="#444"/>
<rect x="54.8" y="647.8" width="66.8" height="14" fill="#b4b6b9"/>
<rect x="70.9" y="648.4" width="1.2" height="12.6" fill="#dfe1e4"/>
<rect x="87.6" y="648.4" width="1.2" height="12.6" fill="#dfe1e4"/>
<rect x="104.3" y="648.4" width="1.2" height="12.6" fill="#dfe1e4"/>
<g fill="#94979b"><rect x="58.6" y="650.8" width="1.4" height="8"/><path d="M67 650.8 L67 658.8 L61 654.8 Z"/><path d="M83 650.8 L83 658.8 L77 654.8 Z"/><path d="M93.6 650.8 L93.6 658.8 L99.6 654.8 Z"/><path d="M108.4 650.8 L108.4 658.8 L114.4 654.8 Z"/><rect x="115" y="650.8" width="1.4" height="8"/></g>
<rect x="54.6" y="647.1" width="67.6" height="1.2" fill="#222"/>
<rect x="165" y="647.1" width="475.6" height="1.2" fill="#222"/>
<rect x="122" y="645.8" width="43.4" height="16.4" fill="#eeeff1"/>
<path d="M122 646 L122 662" stroke="#222" stroke-width="1.2"/><path d="M165.6 647 L165.6 662" stroke="#222" stroke-width="1.4"/>
<text x="132" y="658.6" font-size="12" fill="#111" textLength="25.2" lengthAdjust="spacing">模型</text>
<rect x="167" y="647.8" width="76" height="13.2" fill="#b9b9b9" stroke="#222" stroke-width="1.2"/>
<text x="174" y="658.6" font-size="12" fill="#111" textLength="56" lengthAdjust="spacing">运动算例 1</text>
<rect x="8" y="660.6" width="45" height="1" fill="#a9adb3"/>
<rect x="8" y="661.8" width="634" height="1.6" fill="#1e1e1e"/>
<rect x="8" y="663.4" width="634" height="3.6" fill="#e2e4e8"/>
<g fill="#ebebeb" stroke="none"><text x="491.6" y="633.6" font-size="27" font-weight="bold" textLength="39" lengthAdjust="spacingAndGlyphs">Bai</text><text x="566" y="633" font-size="20" font-weight="bold" font-family="'Noto Sans CJK SC',sans-serif" textLength="40" lengthAdjust="spacingAndGlyphs">经验</text><text x="492" y="649" font-size="12" font-style="italic" font-weight="bold" textLength="114" lengthAdjust="spacingAndGlyphs" fill="#e4e4e6">jingyan.baidu.com</text></g>
<g fill="#ebebeb"><ellipse cx="550" cy="622.6" rx="14" ry="12"/></g><g fill="#ebebeb"><ellipse cx="539" cy="608" rx="3.6" ry="4.6"/><ellipse cx="546.6" cy="602.6" rx="3.6" ry="4.6"/><ellipse cx="555.4" cy="602.6" rx="3.6" ry="4.6"/><ellipse cx="562.4" cy="608.6" rx="3.6" ry="4.6"/></g><text x="541" y="629" font-size="15" font-weight="bold" fill="#fff" textLength="18" lengthAdjust="spacingAndGlyphs">du</text>
</svg></body></html>
